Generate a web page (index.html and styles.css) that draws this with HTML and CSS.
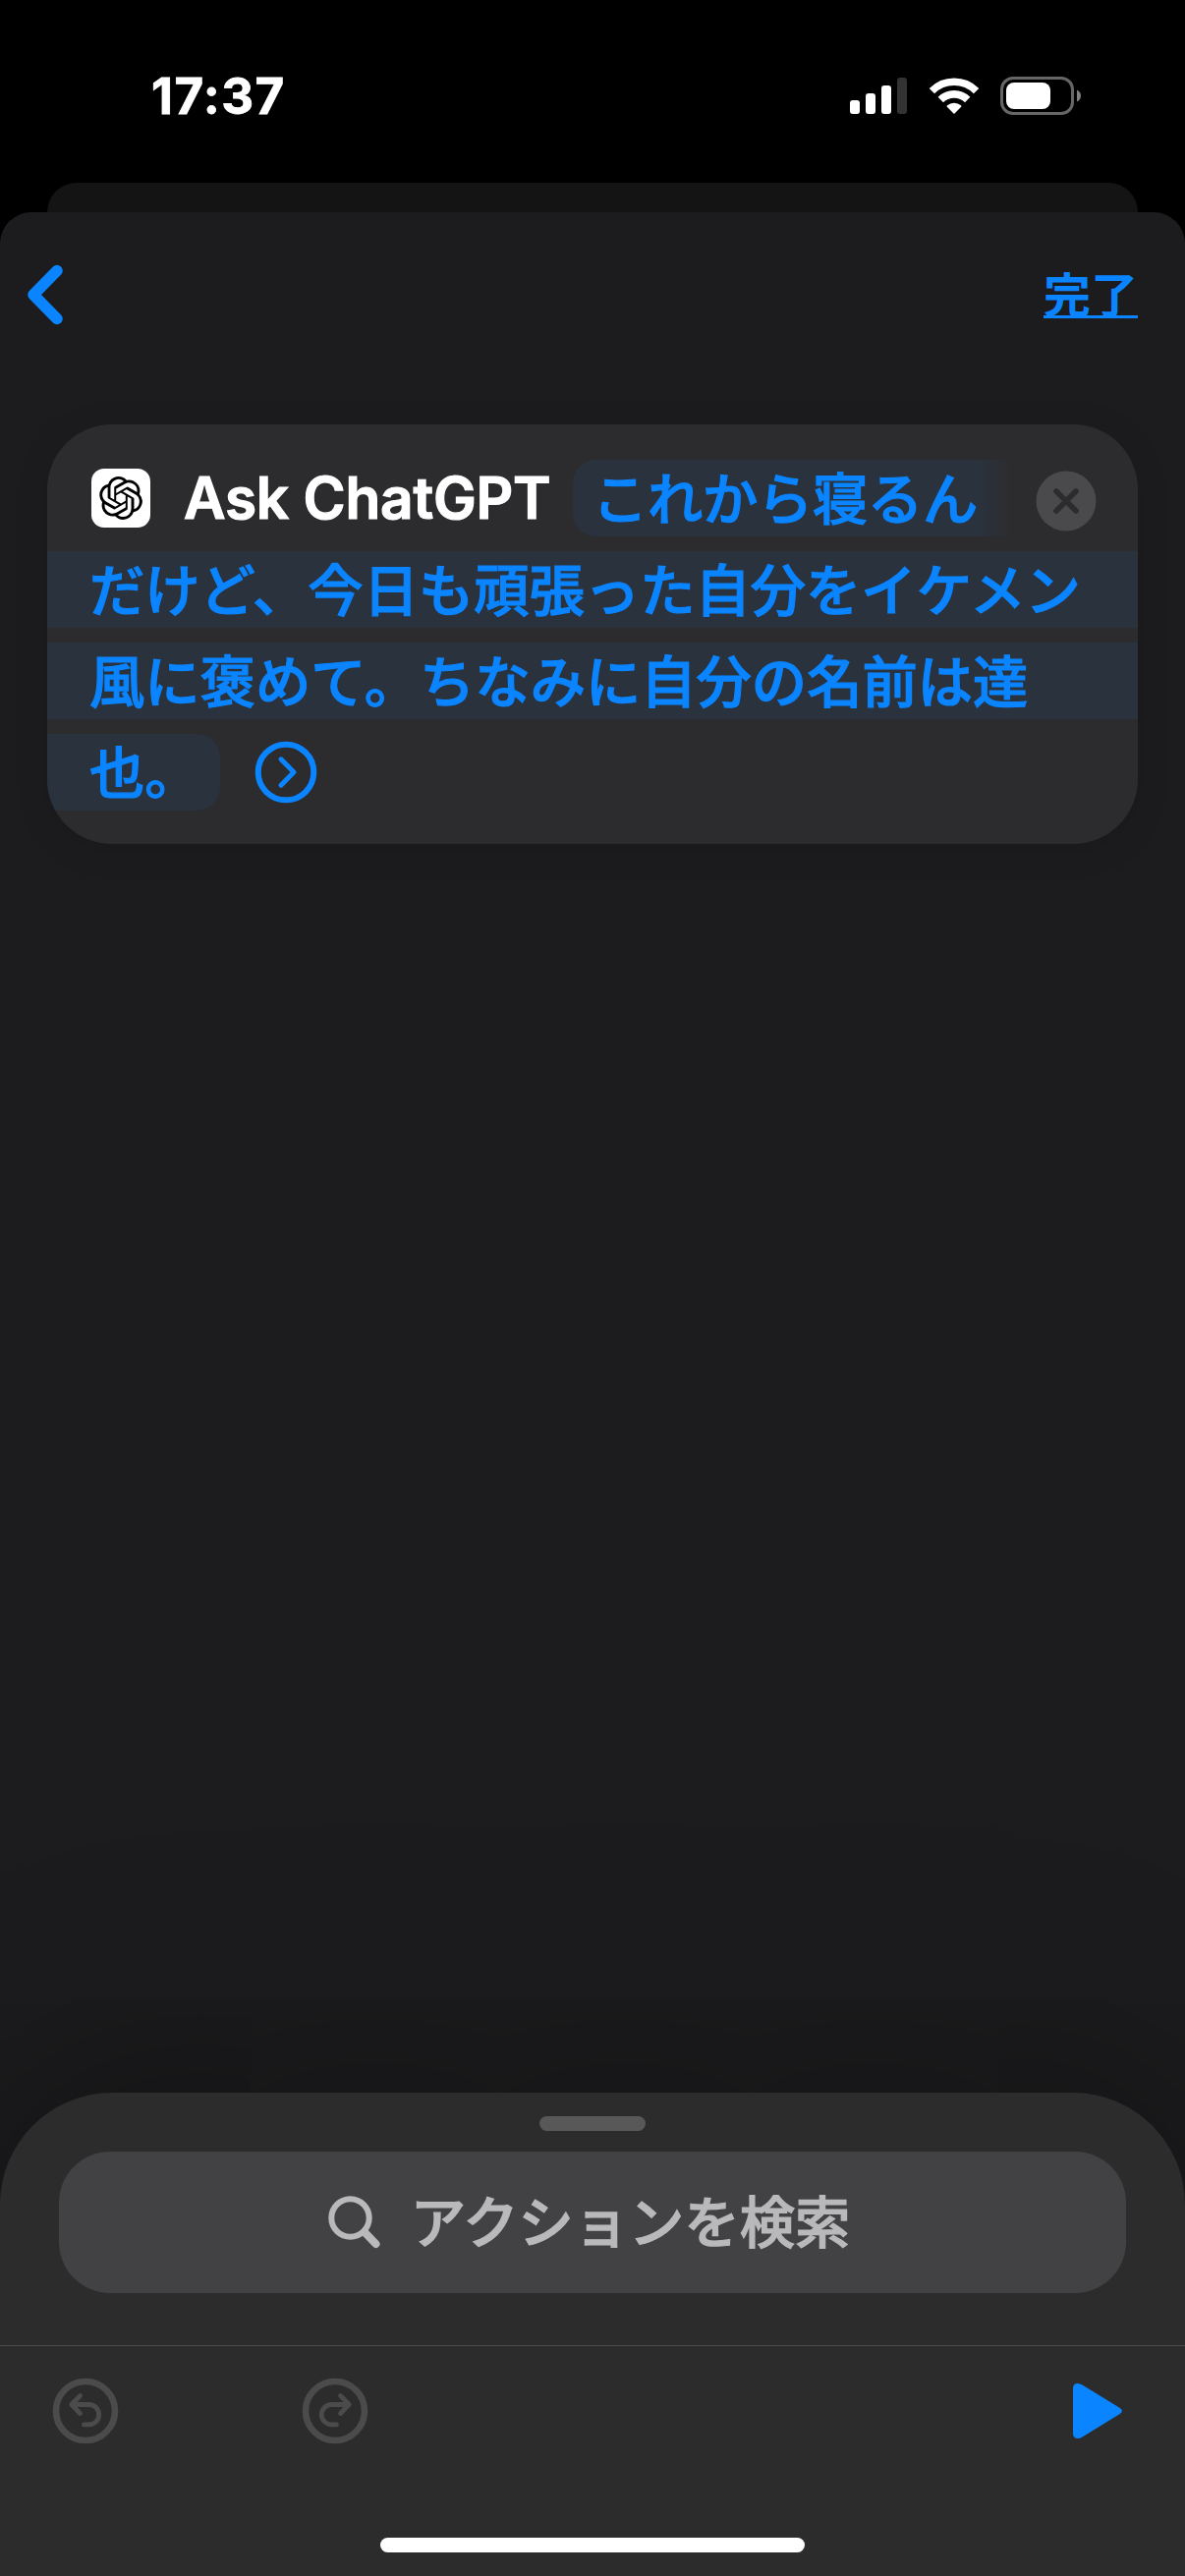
FILE: index.html
```html
<!DOCTYPE html>
<html lang="ja">
<head>
<meta charset="utf-8">
<title>Ask ChatGPT</title>
<link rel="stylesheet" href="styles.css">
</head>
<body>
<div class="screen">
  <header class="status">
    <span class="time">17:37</span>
    <div class="indicators">
      <svg class="signal" width="58" height="38" viewBox="0 0 58 38">
        <g fill="#fff"><rect x="0" y="23" width="10" height="14" rx="3"/><rect x="16" y="16" width="10" height="21" rx="3"/><rect x="32" y="8" width="10" height="29" rx="3"/></g>
        <rect x="48" y="0" width="10" height="37" rx="3" fill="#333"/>
      </svg>
      <svg class="wifi" width="52" height="38" viewBox="0 0 52 38">
        <g fill="none" stroke="#fff" stroke-width="7.6"><path d="M3.4 13.6a32 32 0 0 1 45.200 0"/><path d="M12.300 22.500a19.400 19.400 0 0 1 27.400 0"/></g>
        <path d="M26 37l-7.200-7.200q-.6-.8.2-1.500a10.700 10.700 0 0 1 14 0q.8.7.2 1.500z" fill="#fff"/>
      </svg>
      <svg class="battery" width="83" height="39" viewBox="0 0 83 39">
        <rect x="1.500" y="1.500" width="72" height="36" rx="11.500" fill="none" stroke="#666" stroke-width="3"/>
        <rect x="6" y="6" width="45" height="27" rx="8" fill="#fff"/>
        <path d="M78 13.500q4 2 4 6t-4 6z" fill="#808080"/>
      </svg>
    </div>
  </header>
  <div class="back-sheet"></div>
  <main class="sheet">
    <nav class="nav">
      <svg class="back" width="40" height="64" viewBox="0 0 40 64"><path d="M32 7.500L8 32l24 24.500" fill="none" stroke="#0a84ff" stroke-width="11.500" stroke-linecap="round" stroke-linejoin="round"/></svg>
      <span class="done">完了</span>
    </nav>
    <section class="card">
      <div class="row">
        <span class="app-icon"><svg width="44" height="44" viewBox="0 0 24 24"><path d="M22.2819 9.8211a5.9847 5.9847 0 0 0-.5157-4.9108 6.0462 6.0462 0 0 0-6.5098-2.9A6.0651 6.0651 0 0 0 4.9807 4.1818a5.9847 5.9847 0 0 0-3.9977 2.9 6.0462 6.0462 0 0 0 .7427 7.0966 5.98 5.98 0 0 0 .511 4.9107 6.051 6.051 0 0 0 6.5146 2.9001A5.9847 5.9847 0 0 0 13.2599 24a6.0557 6.0557 0 0 0 5.7718-4.2058 5.9894 5.9894 0 0 0 3.9977-2.9001 6.0557 6.0557 0 0 0-.7475-7.0729zm-9.022 12.6081a4.4755 4.4755 0 0 1-2.8764-1.0408l.1419-.0804 4.7783-2.7582a.7948.7948 0 0 0 .3927-.6813v-6.7369l2.02 1.1686a.071.071 0 0 1 .038.052v5.5826a4.504 4.504 0 0 1-4.4945 4.4944zm-9.6607-4.1254a4.4708 4.4708 0 0 1-.5346-3.0137l.142.0852 4.783 2.7582a.7712.7712 0 0 0 .7806 0l5.8428-3.3685v2.3324a.0804.0804 0 0 1-.0332.0615L9.74 19.9502a4.4992 4.4992 0 0 1-6.1408-1.6464zM2.3408 7.8956a4.485 4.485 0 0 1 2.3655-1.9728V11.6a.7664.7664 0 0 0 .3879.6765l5.8144 3.3543-2.0201 1.1685a.0757.0757 0 0 1-.071 0l-4.8303-2.7865A4.504 4.504 0 0 1 2.3408 7.872zm16.5963 3.8558L13.1038 8.364 15.1192 7.2a.0757.0757 0 0 1 .071 0l4.8303 2.7913a4.4944 4.4944 0 0 1-.6765 8.1042v-5.6772a.79.79 0 0 0-.407-.667zm2.0107-3.0231l-.142-.0852-4.7735-2.7818a.7759.7759 0 0 0-.7854 0L9.409 9.2297V6.8974a.0662.0662 0 0 1 .0284-.0615l4.8303-2.7866a4.4992 4.4992 0 0 1 6.6802 4.66zM8.3065 12.863l-2.02-1.1638a.0804.0804 0 0 1-.038-.0567V6.0742a4.4992 4.4992 0 0 1 7.3757-3.4537l-.142.0805L8.704 5.459a.7948.7948 0 0 0-.3927.6813zm1.0976-2.3654l2.602-1.4998 2.6069 1.4998v2.9994l-2.5974 1.4997-2.6067-1.4997Z"/></svg></span>
        <span class="title">Ask ChatGPT</span>
        <span class="token token-start">これから寝るん</span>
        <svg class="clear" width="62" height="62" viewBox="0 0 62 62"><circle cx="31" cy="31" r="30.500" fill="#4a4a4c"/><path d="M21 21l20 20M41 21L21 41" stroke="#2c2c2e" stroke-width="5.600" stroke-linecap="round"/></svg>
      </div>
      <div class="row token">だけど、今日も頑張った自分をイケメン</div>
      <div class="row token">風に褒めて。ちなみに自分の名前は達</div>
      <div class="row">
        <span class="token token-end">也。</span>
        <svg class="expand" width="64" height="64" viewBox="0 0 64 64"><g fill="none" stroke="#0a84ff" stroke-linecap="round" stroke-linejoin="round"><circle cx="32" cy="32" r="28.300" stroke-width="6"/><path d="M27 18.800L40 32 27 45.200" stroke-width="5"/></g></svg>
      </div>
    </section>
  </main>
  <footer class="panel">
    <div class="grabber"></div>
    <div class="search">
      <svg width="56" height="56" viewBox="0 0 56 56"><g fill="none" stroke="#b9b9bb" stroke-linecap="round"><circle cx="23.500" cy="23.500" r="19.200" stroke-width="6"/><path d="M38 38L49.500 50" stroke-width="8"/></g></svg>
      <span>アクションを検索</span>
    </div>
    <div class="toolbar">
      <svg width="68" height="68" viewBox="0 0 68 68"><g fill="none" stroke="#4b4b4b" stroke-linecap="round" stroke-linejoin="round"><circle cx="34" cy="34" r="30" stroke-width="6.600"/><path d="M28.500 18.500L19.800 27.500l8.700 9M20 27.500h17.500a10.200 10.200 0 0 1 0 20.400H32.500" stroke-width="4.800"/></g></svg>
      <svg class="redo" width="68" height="68" viewBox="0 0 68 68"><g fill="none" stroke="#4b4b4b" stroke-linecap="round" stroke-linejoin="round"><circle cx="34" cy="34" r="30" stroke-width="6.600"/><path d="M39.500 18.500L48.200 27.500l-8.700 9M48 27.500H30.500a10.200 10.200 0 0 0 0 20.400H35.500" stroke-width="4.800"/></g></svg>
      <svg class="play" width="50" height="56" viewBox="0 0 50 56"><path d="M0 5Q0 0 5 0q2 0 4.500 1.500L47 24.500q3 1.800 3 3.500t-3 3.500L9.500 54.500Q7 56 5 56 0 56 0 51z" fill="#0a84ff"/></svg>
    </div>
    <div class="home"></div>
  </footer>
</div>
</body>
</html>
```
FILE: styles.css
```css
* { box-sizing: border-box; }

body {
  margin: 0;
  background: #000;
  font-family: Inter, "Noto Sans CJK JP", sans-serif;
  font-weight: 600;
}

svg { display: block; flex: none; }

.screen {
  display: flex;
  flex-direction: column;
  width: 1206px;
  height: 2622px;
  overflow: hidden;
}

.status {
  display: flex;
  justify-content: space-between;
  height: 186px;
  padding: 78px 105px 0 154px;
}

.time {
  color: #fff;
  font-size: 51px;
  font-weight: 700;
  line-height: 40px;
  letter-spacing: 1.4px;
  -webkit-text-stroke: 0.8px currentColor;
}

.indicators { display: flex; }
.signal { margin: 1px 22px 0 0; }
.wifi { margin: 1px 21px 0 0; }

.back-sheet {
  flex: none;
  height: 30px;
  margin: 0 48px;
  border-radius: 30px 30px 0 0;
  background: #141414;
}

/* The sheet continues underneath the rounded top of the bottom panel. */
.sheet {
  flex: 1;
  margin-bottom: -160px;
  border-radius: 32px 32px 0 0;
  background: #1c1c1e;
}

.nav {
  display: flex;
  align-items: flex-start;
  justify-content: space-between;
  height: 216px;
  padding: 52px 48px 0 26px;
}

.done {
  height: 56px;
  padding-top: 4px;
  border-bottom: 3px solid #0a84ff;
  color: #0a84ff;
  font: 700 48px/50px "Noto Sans CJK JP", sans-serif;
}

.card {
  display: flex;
  flex-direction: column;
  gap: 15px;
  height: 427px;
  margin: 0 48px;
  padding-top: 36px;
  overflow: hidden;
  border-radius: 66px;
  background: #2c2c2e;
  box-shadow: 0 6px 36px rgba(0, 0, 0, 0.1);
}

.row {
  display: flex;
  align-items: center;
  flex: none;
  height: 78px;
  white-space: nowrap;
}

.app-icon {
  display: grid;
  flex: none;
  place-items: center;
  width: 60px;
  height: 60px;
  margin-left: 45px;
  border-radius: 13px;
  background: #fff;
}

.title {
  flex: none;
  width: 430px;
  padding-left: 34px;
  color: #fff;
  font-size: 58.5px;
  line-height: 76px;
  letter-spacing: -0.2px;
  -webkit-text-stroke: 1.2px currentColor;
}

.token {
  height: 78px;
  padding-left: 43px;
  background: #2a323d;
  color: #0a84ff;
  font: 500 56.3px/73px "Noto Sans CJK JP", sans-serif;
  -webkit-text-stroke: 1.2px currentColor;
}

.row.token { padding-bottom: 5px; }

.token-start {
  flex: none;
  width: 447px;
  padding-left: 20px;
  border-radius: 24px 0 0 24px;
  background: linear-gradient(90deg, #2a323d 415px, #2c2c2e 447px);
  letter-spacing: -0.3px;
}

.clear { margin: 5px 0 0 24px; }

.token-end {
  width: 176px;
  border-radius: 0 24px 24px 0;
}

.expand { margin-left: 35px; }

.panel {
  flex: none;
  height: 492px;
  padding-top: 24px;
  border-radius: 114px 114px 0 0;
  background: #2c2c2c;
  box-shadow: 0 0 380px rgba(0, 0, 0, 0.48);
}

.grabber {
  width: 108px;
  height: 15px;
  margin: 0 auto;
  border-radius: 8px;
  background: #585858;
}

.search {
  display: flex;
  align-items: center;
  justify-content: center;
  gap: 29px;
  height: 144px;
  margin: 21px 60px 53px;
  padding: 0 8px 0 0;
  border-radius: 52px;
  background: #424244;
  color: #b9b9bb;
  font: 500 56.3px/72px "Noto Sans CJK JP", sans-serif;
  -webkit-text-stroke: 1.2px currentColor;
}

.search span {
  height: 78px;
}

.toolbar {
  display: flex;
  align-items: center;
  height: 135px;
  padding: 0 64px 2px 53px;
  border-top: 1px solid #4a4a4a;
}

.redo { margin-left: 186px; }
.play { margin-left: auto; }

.home {
  width: 432px;
  height: 15px;
  margin: 61px auto 0;
  border-radius: 8px;
  background: #fff;
}
```
